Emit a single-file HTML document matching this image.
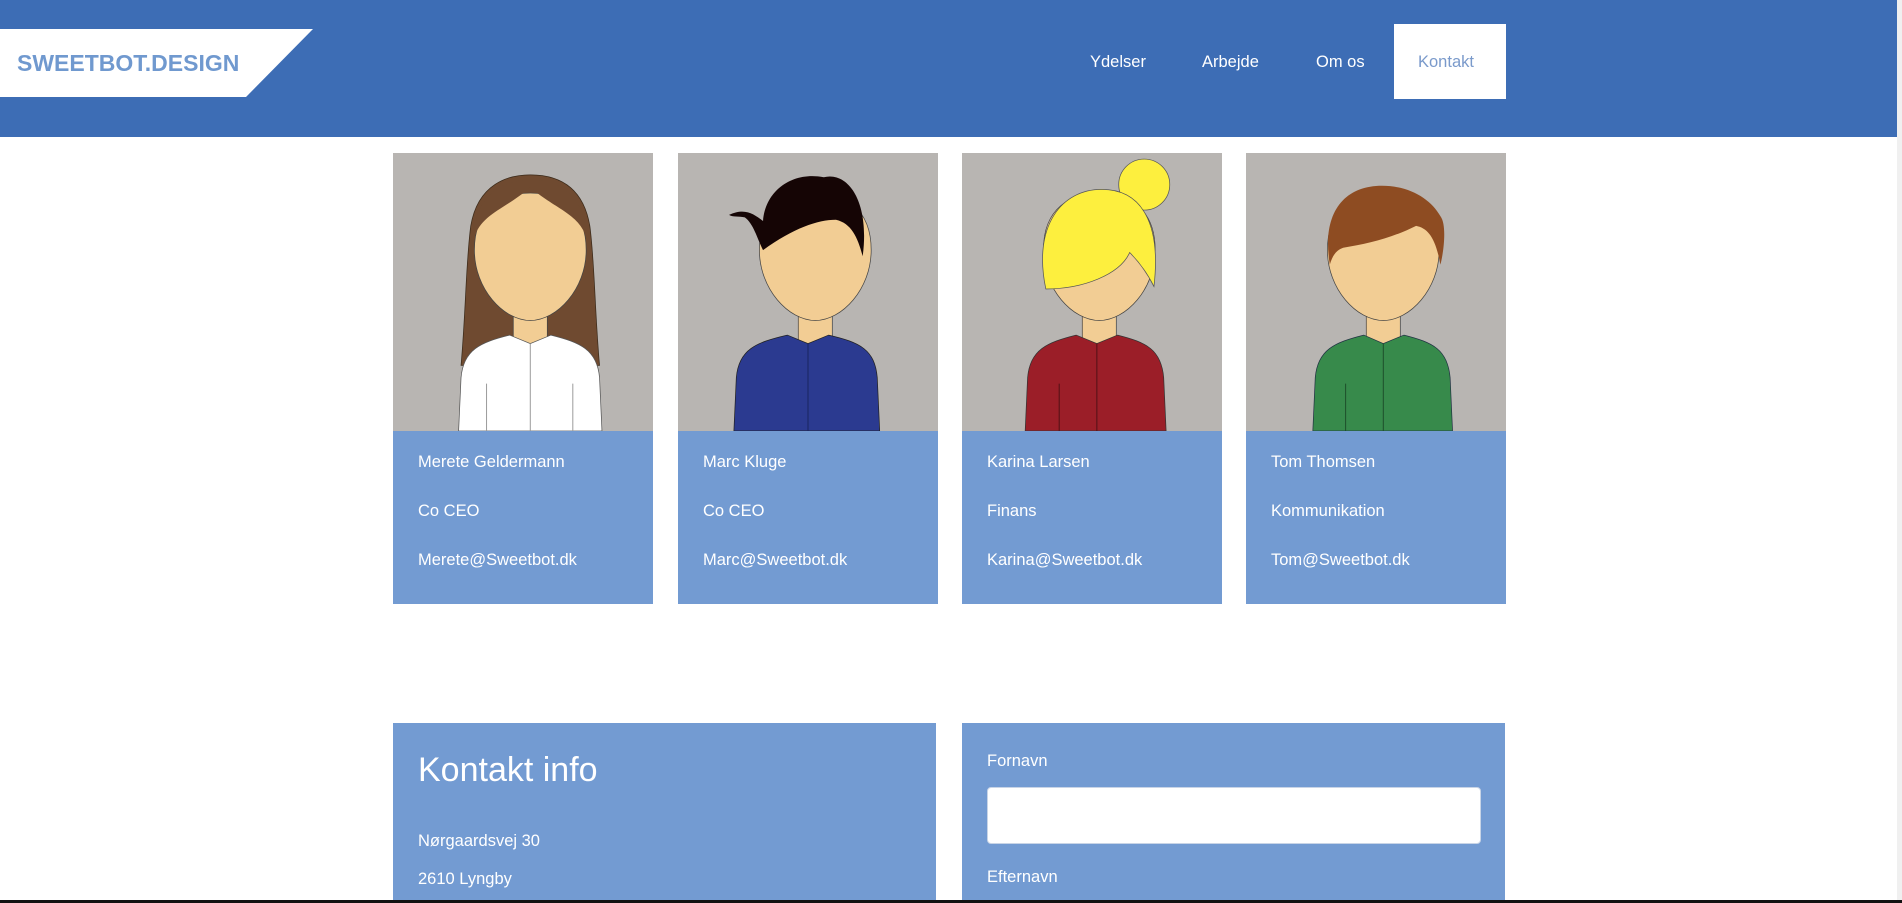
<!DOCTYPE html>
<html><head><meta charset="utf-8"><style>
*{margin:0;padding:0;box-sizing:border-box}
html,body{width:1902px;height:903px;overflow:hidden;background:#fff;font-family:"Liberation Sans",sans-serif}
#hdr{position:absolute;left:0;top:0;width:1897px;height:137px;background:#3d6db5}
#logo{position:absolute;left:0;top:29px;width:313px;height:68px;background:#fff;clip-path:polygon(0 0,313px 0,246px 68px,0 68px)}
#logo span{position:absolute;left:17px;top:21px;font-weight:bold;font-size:23px;color:#7099cf;letter-spacing:0}
.nav{position:absolute;top:53px;color:#fff;font-size:16.5px}
#kbox{position:absolute;left:1394px;top:24px;width:112px;height:75px;background:#fff}
#kbox span{position:absolute;left:24px;top:29px;color:#7a9acb;font-size:16.5px}
.card{position:absolute;top:153px;width:260px;height:451px;background:#739bd2}
.card svg{display:block;width:260px;height:278px}
.card p{position:absolute;left:25px;color:#fff;font-size:16.5px}
.box{position:absolute;top:723px;height:180px;background:#739bd2;color:#fff}
#scroll{position:absolute;left:1897px;top:0;width:5px;height:903px;background:#f0f0f0}
#bl{position:absolute;left:0;top:900px;width:1902px;height:3px;background:#111}
</style></head><body>
<div id="hdr">
<div id="logo"><span>SWEETBOT.DESIGN</span></div>
<div class="nav" style="left:1090px">Ydelser</div>
<div class="nav" style="left:1202px">Arbejde</div>
<div class="nav" style="left:1316px">Om os</div>
<div id="kbox"><span>Kontakt</span></div>
</div>

<svg width="0" height="0" style="position:absolute">
<defs>
<g id="face">
<rect x="99" y="120" width="28" height="40" fill="#f2cd94" stroke="#444" stroke-width="0.6"/>
<path d="M67 80 C67 45 90 33 113 33 C136 33 159 45 159 80 C159 112 135 138 113 138 C91 138 67 112 67 80Z" fill="#f2cd94" stroke="#444" stroke-width="0.6"/>
</g>
</defs>
</svg>

<div class="card" style="left:393px">
<svg viewBox="0 0 214 229" preserveAspectRatio="none"><rect width="214" height="229" fill="#b8b5b2"/>
<path d="M56 175 C60 130 60 90 64 60 C70 25 95 18 113 18 C133 18 156 25 162 60 C166 90 166 130 170 175Z" fill="#6f4a30" stroke="#3a2a1a" stroke-width="0.6"/>
<use href="#face"/>
<path d="M67 70 C72 50 95 45 113 28 C131 45 154 50 159 70 C160 40 140 22 113 22 C86 22 66 40 67 70Z" fill="#6f4a30"/>
<path d="M54 229 L56 185 C58 162 72 156 96 150 L113 157 L130 150 C154 156 168 162 170 185 L172 229Z" fill="#fff" stroke="#555" stroke-width="0.6"/>
<path d="M113 157 V229 M77 190 V229 M148 190 V229" stroke="#999" stroke-width="0.8"/>
</svg>
<p style="top:300px">Merete Geldermann</p><p style="top:349px">Co CEO</p><p style="top:398px">Merete@Sweetbot.dk</p>
</div>

<div class="card" style="left:678px">
<svg viewBox="0 0 214 229" preserveAspectRatio="none"><rect width="214" height="229" fill="#b8b5b2"/>
<use href="#face"/>
<path d="M42 51 C55 45 62 50 70 56 C72 30 95 15 120 20 C140 15 158 40 152 85 C148 70 143 58 130 55 C115 55 95 62 70 80 C65 70 62 58 55 53 C50 52 45 53 42 51Z" fill="#150505"/>
<path d="M46 229 L48 185 C50 162 64 156 90 150 L107 157 L124 150 C150 156 162 162 164 185 L166 229Z" fill="#2b3a90" stroke="#222" stroke-width="0.6"/>
<path d="M107 157 V229" stroke="#1a255e" stroke-width="0.8"/>
</svg>
<p style="top:300px">Marc Kluge</p><p style="top:349px">Co CEO</p><p style="top:398px">Marc@Sweetbot.dk</p>
</div>

<div class="card" style="left:962px">
<svg viewBox="0 0 214 229" preserveAspectRatio="none"><rect width="214" height="229" fill="#b8b5b2"/>
<use href="#face"/>
<circle cx="150" cy="26" r="21" fill="#fdef3e" stroke="#555" stroke-width="0.6"/>
<path d="M69 112 C58 60 82 30 115 30 C148 30 164 58 158 110 C152 98 146 90 138 82 C130 100 100 112 69 112Z" fill="#fdef3e" stroke="#555" stroke-width="0.6"/>
<path d="M52 229 L54 185 C56 162 70 156 94 150 L111 157 L128 150 C152 156 164 162 166 185 L168 229Z" fill="#9b1e28" stroke="#333" stroke-width="0.6"/>
<path d="M111 157 V229 M80 190 V229" stroke="#501015" stroke-width="0.8"/>
</svg>
<p style="top:300px">Karina Larsen</p><p style="top:349px">Finans</p><p style="top:398px">Karina@Sweetbot.dk</p>
</div>

<div class="card" style="left:1246px">
<svg viewBox="0 0 214 229" preserveAspectRatio="none"><rect width="214" height="229" fill="#b8b5b2"/>
<use href="#face"/>
<path d="M69 92 C62 50 80 27 112 27 C135 27 152 38 160 52 C166 60 162 85 160 92 C156 70 150 62 140 60 C120 70 100 75 80 78 C74 80 71 85 69 92Z" fill="#8e4c22"/>
<path d="M55 229 L57 185 C59 162 73 156 97 150 L113 157 L130 150 C154 156 166 162 168 185 L170 229Z" fill="#378a4b" stroke="#234" stroke-width="0.6"/>
<path d="M113 157 V229 M82 190 V229" stroke="#1d4d2a" stroke-width="0.8"/>
</svg>
<p style="top:300px">Tom Thomsen</p><p style="top:349px">Kommunikation</p><p style="top:398px">Tom@Sweetbot.dk</p>
</div>

<div class="box" style="left:393px;width:543px">
<div style="position:absolute;left:25px;top:28px;font-size:34px">Kontakt info</div>
<div style="position:absolute;left:25px;top:109px;font-size:16.5px">Nørgaardsvej 30</div>
<div style="position:absolute;left:25px;top:147px;font-size:16.5px">2610 Lyngby</div>
</div>
<div class="box" style="left:962px;width:543px">
<div style="position:absolute;left:25px;top:29px;font-size:16.5px">Fornavn</div>
<div style="position:absolute;left:25px;top:64px;width:494px;height:57px;background:#fff;border-radius:4px;border:1px solid #c8d4e6"></div>
<div style="position:absolute;left:25px;top:145px;font-size:16.5px">Efternavn</div>
</div>

<div id="scroll"></div>
<div id="bl"></div>
</body></html>
